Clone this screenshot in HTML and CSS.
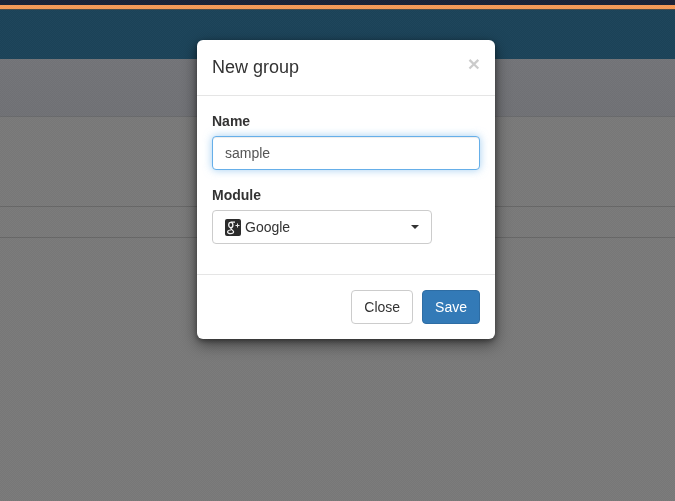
FILE: index.html
```html
<!DOCTYPE html>
<html lang="en">
<head>
<meta charset="utf-8">
<title>New group</title>
<link rel="stylesheet" href="styles.css">
</head>
<body>
<div class="page">
  <div class="top-strip"></div>
  <div class="accent-strip"></div>
  <header class="banner"></header>
  <div class="subbar"></div>
  <div class="content">
    <div class="row row-a"></div>
    <div class="row row-b"></div>
  </div>
</div>
<div class="backdrop"></div>
<div class="modal-layer">
  <div class="modal">
    <div class="modal-header">
      <h4 class="modal-title">New group</h4>
      <span class="close">×</span>
    </div>
    <div class="modal-body">
      <div class="form-group">
        <label class="label" for="name">Name</label>
        <input class="input" id="name" type="text" value="sample">
      </div>
      <div class="form-group">
        <span class="label">Module</span>
        <div class="select">
          <svg class="gplus" width="16" height="17" viewBox="0 0 16 17" aria-hidden="true">
            <rect width="16" height="17" rx="2" fill="#2b2b2b"/>
            <ellipse cx="5.800" cy="6" rx="2.100" ry="2.700" fill="none" stroke="#f4f4f4" stroke-width="1.300"/>
            <path d="M5.800 3.200H10M6.300 8.800c-1 .9-.2 1.400.8 2.100s1.500 1.100 1.500 1.900c0 1.100-1.300 1.800-3 1.800s-3-.6-3-1.700 1.300-1.900 3.300-1.900" fill="none" stroke="#f4f4f4" stroke-width="1.200"/>
            <path d="M12.500 4.500v4M10.500 6.500h4" fill="none" stroke="#e8e8e8" stroke-width="1"/>
          </svg>
          <span class="select-text">Google</span>
          <span class="caret"></span>
        </div>
      </div>
    </div>
    <div class="modal-footer">
      <button class="btn btn-default" type="button">Close</button>
      <button class="btn btn-primary" type="button">Save</button>
    </div>
  </div>
</div>
</body>
</html>
```
FILE: styles.css
```css
* { box-sizing: border-box; }
html, body { height: 100%; }
body {
  margin: 0;
  overflow: hidden;
  background: #7a7a7a;
  font-family: "Liberation Sans", Arial, sans-serif;
  font-size: 14px;
  line-height: 20px;
  color: #333;
}
.page { display: flex; flex-direction: column; height: 100%; }
.top-strip { height: 5px; background: #1a2238; }
.accent-strip { height: 4px; background: #f79a58; }
.banner { height: 50px; background: #1c445a; border-top: 1px solid #4a4a48; }
.subbar {
  height: 58px;
  background: linear-gradient(#747579, #717276);
  border-bottom: 1px solid #6a6b6d;
}
.content { flex: 1; padding-top: 89px; background: #7a7a7a; }
.row { border-top: 1px solid #686868; }
.row-a { height: 31px; }
.backdrop {
  position: fixed;
  inset: 0;
  background: repeating-conic-gradient(rgba(0, 0, 0, .025) 0 25%, rgba(255, 255, 255, .015) 0 50%) 0 0 / 2px 2px;
}
.modal-layer {
  position: fixed;
  inset: 0;
  padding: 40px 180px 0 197px;
}
.modal {
  width: 298px;
  height: 299px;
  background: #fff;
  border-radius: 6px;
  box-shadow: 0 5px 15px rgba(0, 0, 0, .5), 0 2px 5px rgba(0, 0, 0, .35);
  display: flex;
  flex-direction: column;
}
.modal-header {
  height: 56px;
  padding: 15px;
  border-bottom: 1px solid #e5e5e5;
  display: flex;
  justify-content: space-between;
  align-items: flex-start;
}
.modal-title {
  margin: 0;
  font-size: 18px;
  font-weight: 500;
  line-height: 25px;
  color: #333;
}
.close {
  font-size: 21px;
  font-weight: bold;
  line-height: 1;
  color: #000;
  opacity: .2;
  margin-top: -2px;
}
.modal-body { flex: 1; padding: 15px; }
.form-group { margin-bottom: 15px; }
.label {
  display: block;
  margin-bottom: 5px;
  font-weight: bold;
  color: #333;
}
.input {
  display: block;
  width: 100%;
  height: 34px;
  padding: 6px 12px;
  font: inherit;
  color: #555;
  background: #fff;
  border: 1px solid #66afe9;
  border-radius: 4px;
  outline: 0;
  box-shadow: inset 0 1px 1px rgba(0, 0, 0, .075), 0 0 8px rgba(102, 175, 233, .6);
}
.select {
  width: 220px;
  height: 34px;
  padding: 0 12px;
  border: 1px solid #ccc;
  border-radius: 4px;
  background: #fff;
  display: flex;
  align-items: center;
  gap: 4px;
}
.select-text { flex: 1; }
.caret {
  width: 0;
  height: 0;
  border-top: 4px solid #333;
  border-left: 4px solid transparent;
  border-right: 4px solid transparent;
}
.modal-footer {
  height: 65px;
  padding: 15px;
  border-top: 1px solid #e5e5e5;
  display: flex;
  justify-content: flex-end;
  gap: 9px;
}
.btn {
  height: 34px;
  padding: 6px 12px;
  font: inherit;
  border: 1px solid transparent;
  border-radius: 4px;
}
.btn-default { color: #333; background: #fff; border-color: #ccc; }
.btn-primary { color: #fff; background: #337ab7; border-color: #2e6da4; }
```
